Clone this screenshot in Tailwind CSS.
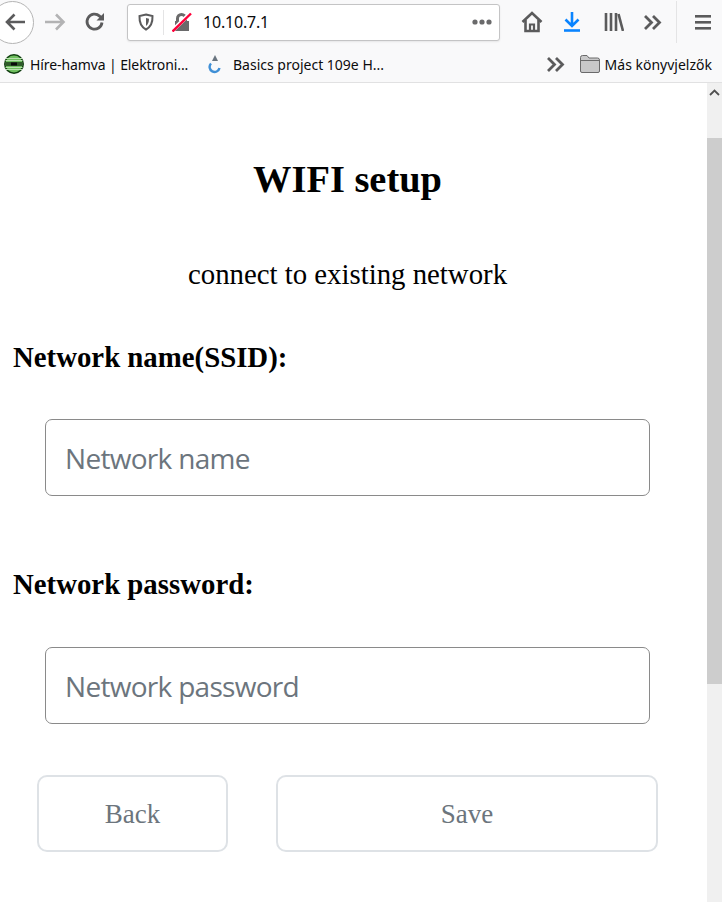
<!DOCTYPE html>
<html lang="hu">
<head>
<meta charset="utf-8">
<title>WIFI setup</title>
<script src="https://cdn.jsdelivr.net/npm/@tailwindcss/browser@4"></script>
</head>
<body class="h-[902px] w-[722px] overflow-hidden bg-white font-['Noto_Sans',sans-serif]">
<div class="flex h-[83px] flex-col border-b border-[#e1e1e2] bg-[#f9f9fa]">
  <div class="flex h-[46px] items-center pb-[2px]">
    <div class="-ml-[9px] flex h-[43px] w-[43px] shrink-0 items-center justify-center rounded-full border border-[#b5b5b5] bg-white pl-[4px]">
      <svg width="22" height="20" viewBox="0 0 22 20" fill="none" stroke="#5b5b5c" stroke-width="2.600"><path d="M21 10H3M10.500 2.500 3 10l7.500 7.500"/></svg>
    </div>
    <svg class="ml-[10px] shrink-0" width="22" height="20" viewBox="0 0 22 20" fill="none" stroke="#b3b3b4" stroke-width="2.600"><path d="M1 10h18M12 2.500l7.500 7.500-7.500 7.500"/></svg>
    <svg class="ml-[18px] shrink-0" width="22" height="20" viewBox="0 0 22 20" fill="none" stroke="#5b5b5c" stroke-width="2.800"><path d="M18 10.500a7.500 7.500 0 1 1-2.400-6.400L19 7"/><path d="M20 1v7.500h-7.500z" fill="#5b5b5c" stroke="none"/></svg>
    <div class="ml-[21px] flex h-[37px] w-[373px] shrink-0 items-center rounded-[3px] border border-[#c4c4c5] bg-white shadow-[0_1px_2px_rgba(0,0,0,0.08)]">
      <svg class="ml-[10px] shrink-0" width="16" height="18" viewBox="0 0 16 18" fill="none"><path d="M8 1.500 14.500 3c.3 6.500-1.800 11-6.500 13.500C3.300 14 1.200 9.500 1.500 3z" stroke="#5b5b5c" stroke-width="2"/><path d="M8 5l3 .8C11 9 10 11.500 8 13z" fill="#5b5b5c"/></svg>
      <div class="ml-[9px] h-[25px] w-px bg-[#e4e4e5]"></div>
      <svg class="ml-[8px] shrink-0" width="20" height="20" viewBox="0 0 20 20"><path d="M4 9V6.500a5.500 5.500 0 0 1 11 0V9h2v10H3V9z" fill="#6a6a6b"/><path d="M7 9V6.500a2.500 2.500 0 0 1 5 0V9z" fill="#fff"/><path d="M1 18 18 1.500" stroke="#fff" stroke-width="4"/><path d="M.5 19.500 19 1.500" stroke="#ff0039" stroke-width="2.400"/></svg>
      <span class="ml-[11px] text-[16px] leading-none tracking-[-0.2px] text-[#0c0c0d]">10.10.7.1</span>
      <svg class="ml-auto mr-[7px] shrink-0" width="20" height="6" viewBox="0 0 20 6" fill="#6a6a6b"><circle cx="3" cy="3" r="2.600"/><circle cx="10" cy="3" r="2.600"/><circle cx="17" cy="3" r="2.600"/></svg>
    </div>
    <svg class="ml-[21px] shrink-0" width="22" height="22" viewBox="0 0 22 22" fill="none" stroke="#5b5b5c" stroke-width="2.600"><path d="M1.500 11 11 2l9.500 9"/><path d="M4.500 9v11h13V9"/><path d="M9 20v-6.500h4V20" stroke-width="2.200"/></svg>
    <svg class="ml-[20px] shrink-0" width="18" height="20" viewBox="0 0 18 20" fill="none" stroke="#0a84ff" stroke-width="2.600"><path d="M9 0v14M2.500 7.500 9 14l6.500-6.500"/><path d="M1 18.500h16"/></svg>
    <svg class="ml-[23px] shrink-0" width="20" height="18" viewBox="0 0 20 18" fill="none" stroke="#5b5b5c" stroke-width="2.600"><path d="M2 0v18M7 0v18M12 0v18"/><path d="M14.500 1 19 18"/></svg>
    <svg class="ml-[20px] shrink-0" width="18" height="15" viewBox="0 0 18 15" fill="none" stroke="#5b5b5c" stroke-width="2.800"><path d="M1 1l6.500 6.500L1 14M9 1l6.500 6.500L9 14"/></svg>
    <div class="ml-[14px] h-[42px] w-px shrink-0 bg-[#e4e4e5]"></div>
    <svg class="ml-[18px] shrink-0" width="16" height="15" viewBox="0 0 16 15" fill="#5b5b5c"><rect width="16" height="2.600" y="0"/><rect width="16" height="2.600" y="6"/><rect width="16" height="2.600" y="12"/></svg>
  </div>
  <div class="flex h-[36px] items-center text-[14px] text-[#0c0c0d]">
    <svg class="ml-[4px] shrink-0" width="20" height="20" viewBox="0 0 20 20"><circle cx="10" cy="10" r="10" fill="#0f3d0f"/><circle cx="10" cy="10" r="8.500" fill="#6fbf5f"/><path d="M2 4.500h16M1.500 6.500h17M1.500 13.500h17M2 15.500h16" stroke="#b7dfae" stroke-width="1"/><rect x="1" y="8" width="18" height="4" fill="#2f5a2a"/><rect x="7" y="8.500" width="6" height="3" fill="#0a0a0a"/></svg>
    <span class="ml-[6px] w-[159px] shrink-0 whitespace-nowrap tracking-[-0.1px]">Híre-hamva | Elektroni...</span>
    <svg class="ml-[19px] shrink-0" width="14" height="20" viewBox="0 0 14 20" fill="none"><path d="M7 1 4 7h6z" fill="#6a7580"/><path d="M3 9.500a5 5 0 1 0 8.500 4.500" stroke="#3f8fd6" stroke-width="2.400"/></svg>
    <span class="ml-[11px] whitespace-nowrap">Basics project 109e H...</span>
    <svg class="ml-auto shrink-0" width="18" height="15" viewBox="0 0 18 15" fill="none" stroke="#5b5b5c" stroke-width="2.800"><path d="M1 1l6.500 6.500L1 14M9 1l6.500 6.500L9 14"/></svg>
    <svg class="ml-[15px] shrink-0" width="20" height="18" viewBox="0 0 20 18"><path d="M.5 16V2.500a2 2 0 0 1 2-2h4.500l2 2.500h8.500a2 2 0 0 1 2 2V16a1.500 1.500 0 0 1-1.500 1.500H2A1.500 1.500 0 0 1 .5 16z" fill="#c8c8c9" stroke="#6a6a6b"/><path d="M.5 5.500h19" stroke="#6a6a6b"/></svg>
    <span class="ml-[5px] mr-[10px] whitespace-nowrap">Más könyvjelzők</span>
  </div>
</div>
<div class="flex h-[819px]">
  <main class="flex w-[707px] flex-col font-['Liberation_Serif',serif] text-black">
    <h1 class="mt-[74px] w-[695px] text-center text-[38.400px] leading-[44px] font-bold">WIFI setup</h1>
    <p class="mt-[57px] w-[695px] text-center text-[28.800px] leading-[33px]">connect to existing network</p>
    <label class="mt-[50px] ml-[13px] text-[28.800px] leading-[33px] font-bold">Network name(SSID):</label>
    <input class="mt-[45px] ml-[45px] h-[77px] w-[605px] rounded-[7px] border border-[#8a8a8a] px-[19px] font-['Open_Sans',sans-serif] text-[28px] tracking-[-0.7px] outline-none placeholder:text-[#6c757d]" placeholder="Network name">
    <label class="mt-[72px] ml-[13px] text-[28.800px] leading-[33px] font-bold">Network password:</label>
    <input class="mt-[46px] ml-[45px] h-[77px] w-[605px] rounded-[7px] border border-[#8a8a8a] px-[19px] font-['Open_Sans',sans-serif] text-[28px] tracking-[-0.7px] outline-none placeholder:text-[#6c757d]" placeholder="Network password">
    <div class="mt-[51px] ml-[37px] flex gap-[48px]">
      <button class="h-[77px] w-[191px] rounded-[10px] border-2 border-[#dee2e6] pt-[2px] text-[27px] text-[#6c757d]">Back</button>
      <button class="h-[77px] w-[382px] rounded-[10px] border-2 border-[#dee2e6] pt-[2px] text-[27px] text-[#6c757d]">Save</button>
    </div>
  </main>
  <div class="flex w-[15px] flex-col bg-[#f0f0f0]">
    <div class="flex h-[55px] justify-center pt-[6px]">
      <svg width="11" height="7" viewBox="0 0 11 7" fill="none" stroke="#505050" stroke-width="1.800"><path d="M1 6l4.500-4.500L10 6"/></svg>
    </div>
    <div class="h-[546px] bg-[#cdcdcd]"></div>
  </div>
</div>
</body>
</html>
